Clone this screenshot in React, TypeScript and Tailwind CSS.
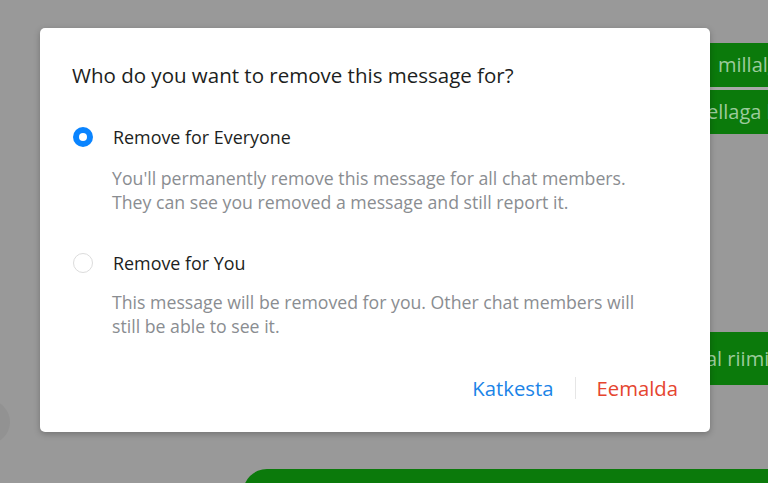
import React from "react";

const font = { fontFamily: '"Open Sans", "Noto Sans", sans-serif' };

export default function App() {
  return (
    <div
      className="relative w-[768px] h-[483px] overflow-hidden bg-[#999999]"
      style={font}
    >
      {/* chat background */}
      <div className="flex flex-col pl-[690px] pt-[43px]">
        <div className="w-[200px] h-[44px] bg-[#0b7a0b] flex items-center pl-[28px] text-[20px] text-[#9ccb9c] whitespace-nowrap">
          millalgi
        </div>
        <div className="h-[3px] w-[200px] bg-[#a9a9a9]" />
        <div className="w-[200px] h-[44px] bg-[#0b7a0b] flex items-center pl-[17px] text-[20px] text-[#9ccb9c] whitespace-nowrap">
          ellaga koos
        </div>
        <div className="w-[200px] h-[53px] mt-[198px] bg-[#0b7a0b] flex items-center pl-[16px] text-[20px] text-[#9ccb9c] whitespace-nowrap">
          al riimis
        </div>
        <div className="ml-[-447px] mt-[84px] w-[600px] h-[60px] rounded-[24px] bg-[#0b7a0b]" />
      </div>
      <div className="absolute left-[-34px] top-[400px] w-[44px] h-[44px] rounded-full bg-[#929292]" />

      {/* dialog */}
      <div className="absolute left-[40px] top-[28px] w-[670px] h-[404px] rounded-[5px] bg-white shadow-[0_2px_6px_rgba(0,0,0,0.25)] px-8 pt-[33px] flex flex-col">
        <div className="text-[20.5px] leading-[28px] text-[#1c1e21]">
          Who do you want to remove this message for?
        </div>

        <div className="mt-[36px] flex items-center">
          <div className="ml-[1px] w-[20px] h-[20px] rounded-full bg-[#0a84ff] flex items-center justify-center">
            <div className="w-[8px] h-[8px] rounded-full bg-white" />
          </div>
          <div className="ml-[20px] text-[17.9px] leading-[24px] text-[#1c1e21]">
            Remove for Everyone
          </div>
        </div>
        <div className="mt-[17px] pl-[40px] text-[17.7px] leading-[24px] text-[#8a8d91]">
          You'll permanently remove this message for all chat members.
          <br />
          They can see you removed a message and still report it.
        </div>

        <div className="mt-[37px] flex items-center">
          <div className="ml-[1px] w-[20px] h-[20px] rounded-full border border-[#dcdcdc] bg-white" />
          <div className="ml-[20px] text-[17.9px] leading-[24px] text-[#1c1e21]">
            Remove for You
          </div>
        </div>
        <div className="mt-[15px] pl-[40px] text-[17.7px] leading-[24px] text-[#8a8d91]">
          This message will be removed for you. Other chat members will
          <br />
          still be able to see it.
        </div>

        <div className="mt-[36px] flex items-center justify-end">
          <button className="text-[20.3px] leading-[28px] text-[#1b84e7]">Katkesta</button>
          <div className="ml-[22px] mr-[20px] w-px h-[22px] bg-[#e6e6e6]" />
          <button className="text-[20.3px] leading-[28px] text-[#e5452f]">Eemalda</button>
        </div>
      </div>
    </div>
  );
}
